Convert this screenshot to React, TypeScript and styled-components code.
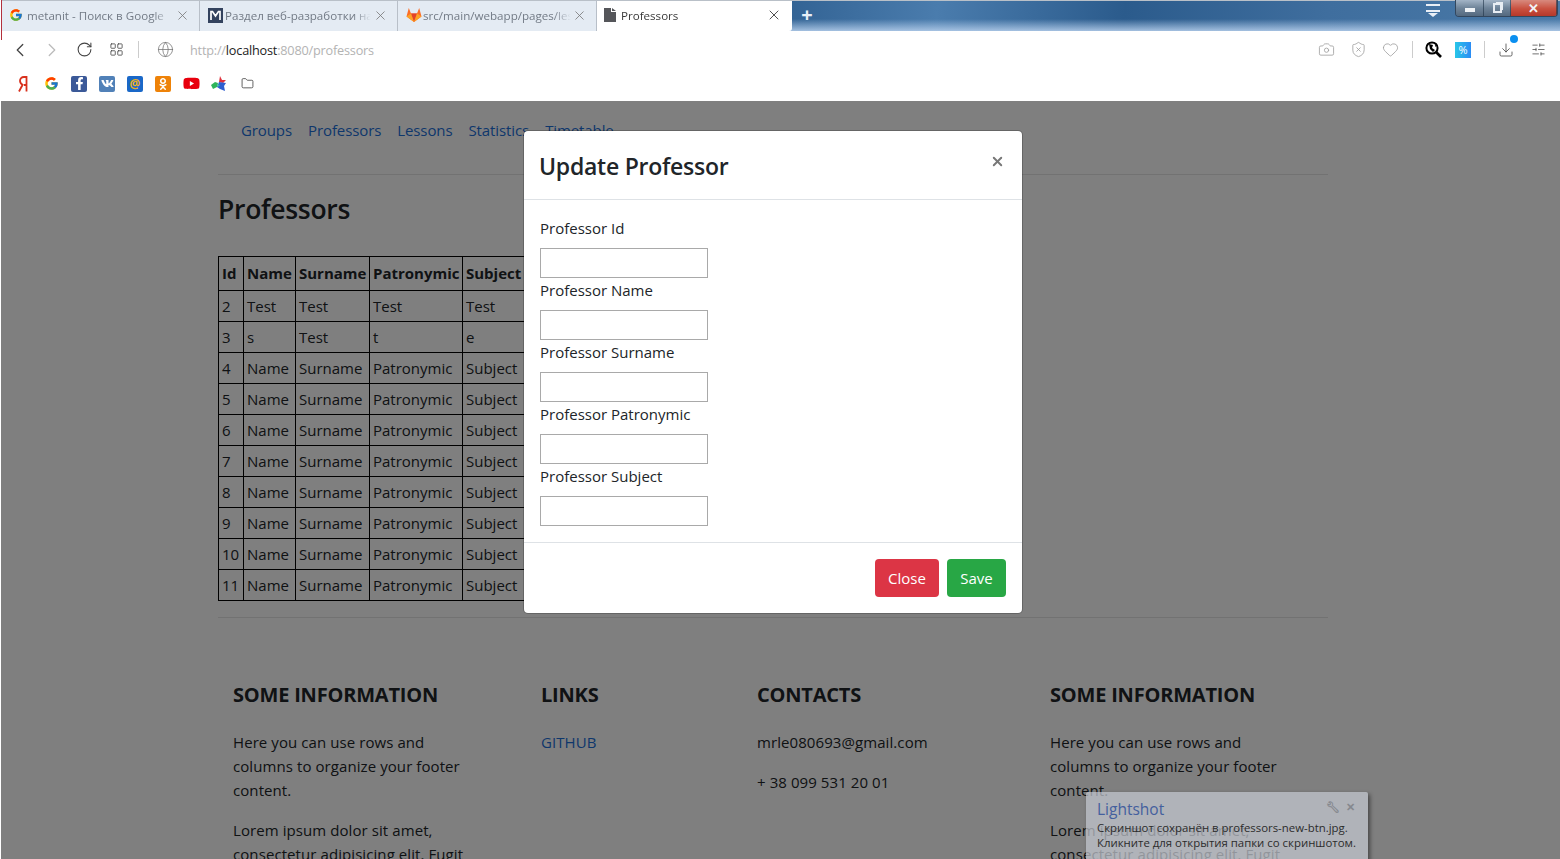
import React from "react";
import styled, { createGlobalStyle } from "styled-components";
import {
  Camera,
  ChevronLeft,
  ChevronRight,
  Download,
  Folder,
  Globe,
  Heart,
  LayoutGrid,
  RotateCw,
  ShieldX,
  SlidersHorizontal,
  X,
} from "lucide-react";
import { FcGoogle } from "react-icons/fc";
import { FaFacebookF, FaOdnoklassniki, FaVk, FaYoutube } from "react-icons/fa";

const GlobalStyle = createGlobalStyle`
  html, body {
    margin: 0;
    height: 100%;
    overflow: hidden;
    background: #fff;
    font-family: "Open Sans", "Liberation Sans", sans-serif;
  }
  * { box-sizing: border-box; }
`;

const GitlabLogo = () => (
  <svg width="16" height="16" viewBox="0 0 16 16">
    <polygon points="8,15 0.5,9.5 2.8,1 5,6.5 11,6.5 13.2,1 15.5,9.5" fill="#fc6d26" />
    <polygon points="8,15 5,6.5 11,6.5" fill="#e24329" />
    <polygon points="8,15 0.5,9.5 5,6.5" fill="#fca326" />
    <polygon points="8,15 15.5,9.5 11,6.5" fill="#fca326" />
  </svg>
);

const MetanitLogo = () => (
  <svg width="15" height="15" viewBox="0 0 15 15">
    <rect width="15" height="15" fill="#34435e" />
    <path d="M3 12V3.5h1.5L7.5 8l3-4.5H12V12" fill="none" stroke="#fff" strokeWidth="1.7" />
  </svg>
);

const PageLogo = () => (
  <svg width="12" height="14" viewBox="0 0 12 14">
    <path d="M0 0h7v4h5v10H0z M8 0l4 3H8z" fill="#55565a" />
  </svg>
);

const YandexLogo = () => (
  <svg width="10" height="16" viewBox="0 0 10 16">
    <path d="M8.5 15.5V1H6C3.5 1 2 2.6 2 4.8c0 2 1 3.2 2.6 4L1 15.5M8.5 9H6" fill="none" stroke="#d8301c" strokeWidth="1.8" />
  </svg>
);

const StarsLogo = () => (
  <svg width="16" height="16" viewBox="0 0 16 16">
    <polygon points="9,0 11,4 15,4 12,7 8,6" fill="#e0323c" />
    <polygon points="0,9 4,6 7,7 6,11 2,13" fill="#2fb45a" />
    <polygon points="8,6 15,7 13,10 14,15 9,13 6,11" fill="#2f5fd0" />
    <polygon points="6,8 9,9 7,11" fill="#35c0a0" />
  </svg>
);

const SearchGlobe = () => (
  <svg width="17" height="17" viewBox="0 0 17 17">
    <circle cx="7" cy="7" r="5.6" fill="#fff" stroke="#000" strokeWidth="2" />
    <path d="M4 3l4 1-1 3 3 2-2 2-3-3zM10 3l1 2-1 1z" fill="#000" />
    <path d="M11 11l5 5" stroke="#000" strokeWidth="2.6" />
  </svg>
);

const Browser = styled.div`
  position: relative;
  width: 1560px;
  height: 859px;
  overflow: hidden;
  display: flex;
  flex-direction: column;
  border-left: 1px solid #fff;
  &::before {
    content: "";
    position: absolute;
    left: -1px;
    top: 0;
    width: 2px;
    height: 40px;
    background: #b3303c;
    z-index: 2;
  }
`;

const TabStrip = styled.div`
  height: 31px;
  flex: none;
  display: flex;
  align-items: stretch;
  border-top: 1px solid #b9c0c8;
  background:
    linear-gradient(180deg, rgba(255, 255, 255, 0) 60%, rgba(176, 202, 232, 0.9) 100%),
    linear-gradient(96deg, #4b7cae 0, #3b6c9e 20%, #4d80b2 34%, #2f5f90 49%, #4a7cad 60%, #2b5b8c 72%, #3f6e9e 85%, #4a7aa8 100%);
`;

const Tab = styled.div<{ $active?: boolean; $width: number; $gap: number }>`
  width: ${(p) => p.$width}px;
  flex: none;
  display: flex;
  align-items: center;
  gap: ${(p) => p.$gap}px;
  padding: 0 6px 2px ${(p) => (p.$active ? "7px" : "8px")};
  background: ${(p) => (p.$active ? "#fff" : "#e4ebf3")};
  border-right: 1px solid ${(p) => (p.$active ? "#fff" : "#b8bfc8")};
  border-radius: ${(p) => (p.$active ? "0 0 3px 0" : "0")};
  color: ${(p) => (p.$active ? "#3a3a3a" : "#737b86")};
  font-size: 11.6px;
`;

const TabTitle = styled.span`
  flex: 1;
  min-width: 0;
  overflow: hidden;
  white-space: nowrap;
  -webkit-mask-image: linear-gradient(90deg, #000 88%, transparent 100%);
  mask-image: linear-gradient(90deg, #000 88%, transparent 100%);
`;

const TabClose = styled(X)<{ $active?: boolean }>`
  flex: none;
  margin-right: 3px;
  color: ${(p) => (p.$active ? "#333" : "#777")};
`;

const NewTab = styled.div`
  width: 30px;
  text-align: center;
  color: #e8f0f8;
  font-size: 20px;
  font-weight: 700;
  line-height: 27px;
`;

const CaptionArea = styled.div`
  margin-left: auto;
  display: flex;
  align-items: flex-start;
  gap: 15px;
  padding-right: 2px;
`;

const CaptionMenu = styled.div`
  width: 14px;
  margin-top: 3px;
  height: 8px;
  border-top: 2px solid #e9eff6;
  border-bottom: 2px solid #e9eff6;
  position: relative;
  &::after {
    content: "";
    position: absolute;
    left: 2px;
    bottom: -7px;
    border: 5px solid transparent;
    border-top: 4px solid #e9eff6;
    border-bottom: 0;
  }
`;

const CaptionButtons = styled.div`
  display: flex;
  height: 17px;
  margin-top: -1px;
  border: 1px solid #33475e;
  border-top: 0;
  border-radius: 0 0 4px 4px;
  overflow: hidden;
`;

const CaptionButton = styled.div<{ $width: number; $close?: boolean }>`
  width: ${(p) => p.$width}px;
  display: flex;
  align-items: center;
  justify-content: center;
  color: #f1f4f8;
  border-right: 1px solid rgba(30, 50, 70, 0.6);
  font-size: 13px;
  font-weight: 700;
  background: ${(p) =>
    p.$close
      ? "linear-gradient(180deg, #d88a7e 0, #c9503f 55%, #b5382a 100%)"
      : "linear-gradient(180deg, #a3b4c6 0, #6f8499 50%, #54697f 100%)"};
`;

const MinimizeBar = styled.div`
  width: 10px;
  height: 4px;
  margin-top: 4px;
  background: #eef2f6;
`;

const RestoreBox = styled.div`
  width: 9px;
  height: 10px;
  border: 2px solid #e8edf3;
  box-shadow: 2px -2px 0 -1px #e8edf3;
`;

const Toolbar = styled.div`
  height: 35px;
  flex: none;
  background: #fff;
  display: flex;
  align-items: center;
  padding: 2px 6px 0 3px;
`;

const ToolButton = styled.div<{ $tone?: string; $width?: number; $shift?: number }>`
  position: relative;
  width: ${(p) => p.$width || 32}px;
  height: 24px;
  flex: none;
  margin-left: ${(p) => p.$shift || 0}px;
  display: flex;
  align-items: center;
  justify-content: center;
  color: ${(p) => p.$tone || "#444"};
`;

const ToolSeparator = styled.div<{ $space: number }>`
  width: 1px;
  height: 17px;
  flex: none;
  background: #ccc;
  margin: 0 ${(p) => p.$space}px;
`;

const UrlBar = styled.div`
  flex: 1;
  margin-left: 9px;
  font-size: 12.7px;
  color: #b3b3b3;
  letter-spacing: -0.2px;
`;

const UrlHost = styled.span`
  color: #222;
`;

const Dot = styled.span`
  position: absolute;
  right: 4px;
  top: -3px;
  width: 8px;
  height: 8px;
  border-radius: 50%;
  background: #0a8ff0;
`;

const PercentTile = styled.div`
  width: 16px;
  height: 16px;
  background: linear-gradient(90deg, #28c6e8, #2a8cf5);
  color: #fff;
  font-size: 11px;
  line-height: 16px;
  text-align: center;
`;

const Bookmarks = styled.div`
  height: 35px;
  flex: none;
  background: #fff;
  display: flex;
  align-items: center;
  padding: 0 0 0 8px;
`;

const Bookmark = styled.div`
  width: 28px;
  flex: none;
  display: flex;
  justify-content: center;
  align-items: center;
`;

const Tile = styled.div<{ $bg: string; $fg?: string }>`
  width: 16px;
  height: 16px;
  border-radius: 2px;
  display: flex;
  align-items: center;
  justify-content: center;
  background: ${(p) => p.$bg};
  color: ${(p) => p.$fg || "#fff"};
  font-size: 12px;
  font-weight: 700;
`;

const Viewport = styled.div`
  position: relative;
  flex: 1;
  min-height: 0;
  overflow: hidden;
  background: #fff;
  color: #212529;
  font-size: 15px;
  line-height: 24px;
`;

const Container = styled.div`
  width: 1110px;
  margin-left: 217px;
`;

const Nav = styled.nav`
  display: flex;
  gap: 16px;
  padding: 17px 0 0 23px;
  height: 74px;
  border-bottom: 1px solid rgba(0, 0, 0, 0.1);
`;

const NavLink = styled.a`
  color: #1c6fd8;
  font-size: 15px;
  line-height: 24px;
  letter-spacing: -0.1px;
`;

const Heading = styled.h2`
  margin: 14px 0 0;
  height: 67px;
  font-size: 26.5px;
  line-height: 40px;
  font-weight: 600;
  letter-spacing: -0.3px;
`;

const DataTable = styled.table`
  border-collapse: collapse;
  table-layout: fixed;
  width: 314px;
  font-size: 15px;
  th, td {
    border: 1px solid #000;
    padding: 0 0 0 3px;
    text-align: left;
    white-space: nowrap;
    line-height: 24px;
  }
  th { height: 34px; font-weight: 700; padding-bottom: 1px; }
  td { height: 31px; }
`;

const Col = styled.col<{ $width: number }>`
  width: ${(p) => p.$width}px;
`;

const Divider = styled.hr`
  margin: 16px 0 0;
  border: 0;
  border-top: 1px solid rgba(0, 0, 0, 0.1);
`;

const Footer = styled.footer`
  display: grid;
  grid-template-columns: 308px 216px 293px 1fr;
  padding: 65px 0 0 15px;
`;

const FooterColumn = styled.div`
  width: 240px;
`;

const FooterTitle = styled.h5`
  margin: 0 0 23px;
  font-size: 20px;
  line-height: 24px;
  font-weight: 700;
  text-transform: uppercase;
  letter-spacing: -0.2px;
`;

const FooterText = styled.p`
  margin: 0 0 16px;
  letter-spacing: 0.08px;
`;

const FooterLink = styled.a`
  color: #1c6fd8;
`;

const Backdrop = styled.div`
  position: absolute;
  inset: 0;
  background: rgba(0, 0, 0, 0.5);
`;

const Modal = styled.div`
  position: absolute;
  left: 522px;
  top: 29px;
  width: 500px;
  background: #fff;
  border: 1px solid rgba(0, 0, 0, 0.2);
  border-radius: 5px;
  background-clip: padding-box;
`;

const ModalHeader = styled.div`
  height: 69px;
  display: flex;
  justify-content: space-between;
  padding: 19px 17px 0 15px;
  border-bottom: 1px solid #dee2e6;
`;

const ModalTitle = styled.h5`
  margin: 0;
  font-size: 23px;
  line-height: 32px;
  font-weight: 600;
  letter-spacing: -0.25px;
`;

const ModalClose = styled(X)`
  margin: 4px 0 0;
  color: #777;
`;

const ModalBody = styled.div`
  height: 342px;
  padding: 16px 16px 0;
`;

const Field = styled.div`
  display: flex;
  flex-direction: column;
  align-items: flex-start;
`;

const FieldLabel = styled.label`
  margin-bottom: 8px;
  line-height: 24px;
`;

const FieldInput = styled.input`
  width: 168px;
  height: 30px;
  background: #fff;
  border: 1px solid #a9a9a9;
`;

const ModalFooter = styled.div`
  height: 71px;
  display: flex;
  justify-content: flex-end;
  align-items: flex-start;
  gap: 8px;
  padding: 16px 16px 0;
  border-top: 1px solid #dee2e6;
`;

const Button = styled.button<{ $bg: string; $width: number }>`
  width: ${(p) => p.$width}px;
  height: 38px;
  border: 0;
  border-radius: 4px;
  background: ${(p) => p.$bg};
  color: #fff;
  font: 400 15px/24px "Open Sans", sans-serif;
  padding: 0;
`;

const Toast = styled.div`
  position: absolute;
  left: 1085px;
  top: 691px;
  width: 282px;
  height: 80px;
  padding: 7px 11px;
  background: rgba(196, 200, 208, 0.72);
  border-radius: 2px;
  box-shadow: 2px 2px 4px rgba(0, 0, 0, 0.45);
  color: #2c2c2c;
`;

const ToastTitle = styled.div`
  color: #44609e;
  font-size: 15.5px;
  line-height: 21px;
`;

const ToastText = styled.div`
  font-size: 11.4px;
  line-height: 15px;
  white-space: nowrap;
`;

const ToastTools = styled.div`
  position: absolute;
  right: 13px;
  top: 8px;
  display: flex;
  gap: 6px;
  color: #85888e;
  font-size: 11px;
  font-weight: 700;
  line-height: 14px;
`;

const rows = [
  ["2", "Test", "Test", "Test", "Test"],
  ["3", "s", "Test", "t", "e"],
  ...[4, 5, 6, 7, 8, 9, 10, 11].map((id) => [String(id), "Name", "Surname", "Patronymic", "Subject"]),
];

const navItems = ["Groups", "Professors", "Lessons", "Statistics", "Timetable"];
const fields = ["Professor Id", "Professor Name", "Professor Surname", "Professor Patronymic", "Professor Subject"];

const InfoColumn = () => (
  <FooterColumn>
    <FooterTitle>Some information</FooterTitle>
    <FooterText>Here you can use rows and columns to organize your footer content.</FooterText>
    <FooterText>Lorem ipsum dolor sit amet, consectetur adipisicing elit. Fugit amet numquam iure provident.</FooterText>
  </FooterColumn>
);

const App: React.FC = () => {
  return (
    <Browser>
      <GlobalStyle />
      <TabStrip>
        <Tab $width={199} $gap={4}>
          <FcGoogle size={14} />
          <TabTitle>metanit - Поиск в Google</TabTitle>
          <TabClose size={15} strokeWidth={1.3} />
        </Tab>
        <Tab $width={198} $gap={2}>
          <MetanitLogo />
          <TabTitle>Раздел веб-разработки на Java</TabTitle>
          <TabClose size={15} strokeWidth={1.3} />
        </Tab>
        <Tab $width={199} $gap={1}>
          <GitlabLogo />
          <TabTitle>src/main/webapp/pages/lessons</TabTitle>
          <TabClose size={15} strokeWidth={1.3} />
        </Tab>
        <Tab $active $width={195} $gap={5}>
          <PageLogo />
          <TabTitle>Professors</TabTitle>
          <TabClose $active size={16} strokeWidth={1.3} />
        </Tab>
        <NewTab>+</NewTab>
        <CaptionArea>
          <CaptionMenu />
          <CaptionButtons>
            <CaptionButton $width={28}><MinimizeBar /></CaptionButton>
            <CaptionButton $width={27}><RestoreBox /></CaptionButton>
            <CaptionButton $width={46} $close>✕</CaptionButton>
          </CaptionButtons>
        </CaptionArea>
      </TabStrip>

      <Toolbar>
        <ToolButton><ChevronLeft size={22} strokeWidth={1.4} /></ToolButton>
        <ToolButton $tone="#bbb"><ChevronRight size={22} strokeWidth={1.4} /></ToolButton>
        <ToolButton><RotateCw size={17} strokeWidth={1.5} /></ToolButton>
        <ToolButton><LayoutGrid size={15} strokeWidth={1.3} /></ToolButton>
        <ToolSeparator $space={6} />
        <ToolButton $tone="#777" $shift={4}><Globe size={17} strokeWidth={1.1} /></ToolButton>
        <UrlBar>
          http://<UrlHost>localhost</UrlHost>:8080/professors
        </UrlBar>
        <ToolButton $tone="#999"><Camera size={17} strokeWidth={1.1} /></ToolButton>
        <ToolButton $tone="#999"><ShieldX size={17} strokeWidth={1.1} /></ToolButton>
        <ToolButton $tone="#999"><Heart size={17} strokeWidth={1.1} /></ToolButton>
        <ToolSeparator $space={6} />
        <ToolButton $tone="#000" $width={28}><SearchGlobe /></ToolButton>
        <ToolButton $tone="#fff"><PercentTile>%</PercentTile></ToolButton>
        <ToolSeparator $space={5} />
        <ToolButton><Download size={16} strokeWidth={1.2} /><Dot /></ToolButton>
        <ToolButton><SlidersHorizontal size={15} strokeWidth={1.2} /></ToolButton>
      </Toolbar>

      <Bookmarks>
        <Bookmark><YandexLogo /></Bookmark>
        <Bookmark><FcGoogle size={15} /></Bookmark>
        <Bookmark><Tile $bg="#3b5998"><FaFacebookF size={13} /></Tile></Bookmark>
        <Bookmark><Tile $bg="#5181b8"><FaVk size={13} /></Tile></Bookmark>
        <Bookmark><Tile $bg="#1a68c8" $fg="#f0b020">@</Tile></Bookmark>
        <Bookmark><Tile $bg="#ee8208"><FaOdnoklassniki size={12} /></Tile></Bookmark>
        <Bookmark><FaYoutube size={17} color="#e8000d" /></Bookmark>
        <Bookmark><StarsLogo /></Bookmark>
        <Bookmark><Folder size={13} strokeWidth={1.4} color="#333" /></Bookmark>
      </Bookmarks>

      <Viewport>
        <Container>
          <Nav>
            {navItems.map((item) => (
              <NavLink key={item}>{item}</NavLink>
            ))}
          </Nav>
          <Heading>Professors</Heading>
          <DataTable>
            <colgroup>
              <Col $width={25} />
              <Col $width={52} />
              <Col $width={74} />
              <Col $width={93} />
              <Col $width={70} />
            </colgroup>
            <thead>
              <tr>
                <th>Id</th>
                <th>Name</th>
                <th>Surname</th>
                <th>Patronymic</th>
                <th>Subject</th>
              </tr>
            </thead>
            <tbody>
              {rows.map((row) => (
                <tr key={row[0]}>
                  {row.map((cell, i) => (
                    <td key={i}>{cell}</td>
                  ))}
                </tr>
              ))}
            </tbody>
          </DataTable>
          <Divider />
          <Footer>
            <InfoColumn />
            <FooterColumn>
              <FooterTitle>Links</FooterTitle>
              <FooterText><FooterLink>GITHUB</FooterLink></FooterText>
            </FooterColumn>
            <FooterColumn>
              <FooterTitle>Contacts</FooterTitle>
              <FooterText>mrle080693@gmail.com</FooterText>
              <FooterText>+ 38 099 531 20 01</FooterText>
            </FooterColumn>
            <InfoColumn />
          </Footer>
        </Container>

        <Backdrop />

        <Modal>
          <ModalHeader>
            <ModalTitle>Update Professor</ModalTitle>
            <ModalClose size={15} strokeWidth={3} />
          </ModalHeader>
          <ModalBody>
            {fields.map((label) => (
              <Field key={label}>
                <FieldLabel>{label}</FieldLabel>
                <FieldInput />
              </Field>
            ))}
          </ModalBody>
          <ModalFooter>
            <Button $bg="#dc3545" $width={64}>Close</Button>
            <Button $bg="#28a745" $width={59}>Save</Button>
          </ModalFooter>
        </Modal>

        <Toast>
          <ToastTitle>Lightshot</ToastTitle>
          <ToastTools><span>🔧︎</span><span>✕</span></ToastTools>
          <ToastText>Скриншот сохранён в professors-new-btn.jpg.</ToastText>
          <ToastText>Кликните для открытия папки со скриншотом.</ToastText>
        </Toast>
      </Viewport>
    </Browser>
  );
};

export default App;
